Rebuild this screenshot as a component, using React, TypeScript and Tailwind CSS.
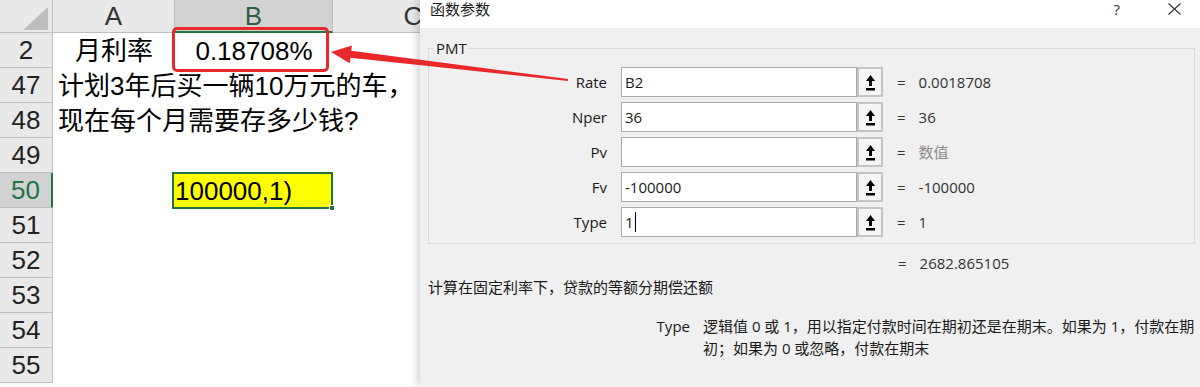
import React from 'react';

interface Param {
  label: string;
  value: string;
  result: string;
  muted?: boolean;
  caret?: boolean;
}

const params: Param[] = [
  { label: 'Rate', value: 'B2', result: '0.0018708' },
  { label: 'Nper', value: '36', result: '36' },
  { label: 'Pv', value: '', result: '数值', muted: true },
  { label: 'Fv', value: '-100000', result: '-100000' },
  { label: 'Type', value: '1', result: '1', caret: true },
];

const lowerRows = [49, 50, 51, 52, 53, 54, 55];

const RefIcon = () => (
  <svg width="11" height="17" viewBox="0 0 11 17">
    <polygon points="5.5,1 1,7 4,7 4,12 7,12 7,7 10,7" fill="#000" />
    <rect x="1" y="14" width="9" height="2.5" fill="#000" />
  </svg>
);

const RowHead: React.FC<{ n: number; active?: boolean }> = ({ n, active }) => (
  <div
    className={
      active
        ? 'flex w-[53px] shrink-0 items-center justify-center border-r-2 border-b border-r-[#217346] border-b-[#bfbfbf] bg-[#d2d2d2] text-[#217346]'
        : 'flex w-[53px] shrink-0 items-center justify-center border-r border-b border-[#bfbfbf] bg-[#e9e9e9] text-[#222]'
    }
  >
    {n}
  </div>
);

const Sheet = () => (
  <div className="w-[420px] shrink-0 overflow-hidden bg-white font-['Liberation_Sans','Noto_Sans_CJK_SC',sans-serif] text-[26px] leading-none text-black">
    <div className="flex h-[33px] w-[500px]">
      <div className="relative w-[53px] shrink-0 border-r border-b border-[#bfbfbf] bg-[#e9e9e9]">
        <svg className="absolute left-0 top-0" width="53" height="33">
          <polygon points="48,7 48,30 23,30" fill="#bdbdbd" />
        </svg>
      </div>
      <div className="flex w-[122px] shrink-0 items-center justify-center border-r border-b border-[#bfbfbf] bg-[#e9e9e9] text-[#333]">
        A
      </div>
      <div className="flex w-[158px] shrink-0 items-center justify-center border-r border-b-2 border-r-[#bfbfbf] border-b-[#217346] bg-[#d2d2d2] text-[#2f5d45]">
        B
      </div>
      <div className="flex w-[160px] shrink-0 items-center justify-center border-b border-[#bfbfbf] bg-[#e9e9e9] text-[#333]">
        C
      </div>
    </div>

    <div className="flex h-[35px]">
      <RowHead n={2} />
      <div className="flex w-[122px] shrink-0 items-center justify-center">月利率</div>
      <div className="flex w-[158px] shrink-0 items-center justify-center">0.18708%</div>
    </div>

    <div className="flex h-[35px]">
      <RowHead n={47} />
      <div className="flex items-center whitespace-nowrap pl-[5px]">计划3年后买一辆10万元的车，</div>
    </div>
    <div className="flex h-[35px]">
      <RowHead n={48} />
      <div className="flex items-center whitespace-nowrap pl-[5px]">现在每个月需要存多少钱?</div>
    </div>

    {lowerRows.map((n) => (
      <div key={n} className="flex h-[35px]">
        <RowHead n={n} active={n === 50} />
        {n === 50 && (
          <div className="relative -mt-px ml-[119px] flex h-[37px] w-[161px] shrink-0 items-center border-2 border-[#217346] bg-[#ffff00] pl-[1px] whitespace-nowrap">
            100000,1)
            <span className="absolute -right-[4px] -bottom-[4px] h-[6px] w-[6px] border border-white bg-[#217346]" />
          </div>
        )}
      </div>
    ))}
  </div>
);

const Dialog = () => (
  <div className="relative flex-1 bg-[#f0f0f0] font-['Open_Sans','Noto_Sans_CJK_SC',sans-serif] text-[15px] text-[#1a1a1a] shadow-[-3px_0_8px_rgba(0,0,0,0.18)]">
    <div className="flex h-[28px] bg-white">
      <div className="pl-[10px] leading-[18px]">函数参数</div>
      <div className="ml-auto pt-[1px] pr-[48px] text-[15px] leading-[16px] text-[#333]">?</div>
      <svg className="mr-[19px] mt-[3px]" width="13" height="12" viewBox="0 0 13 12">
        <path d="M0.5 0.5 L12.5 11.5 M12.5 0.5 L0.5 11.5" stroke="#333" strokeWidth="1.1" fill="none" />
      </svg>
    </div>

    <fieldset className="mt-[10px] mr-[5px] ml-[8px] border border-[#dcdcdc] pb-[6px]">
      <legend className="ml-[5px] px-[2px] leading-[20px]">PMT</legend>
      <div className="mt-[9px] flex flex-col gap-[5px]">
        {params.map((p) => (
          <div key={p.label} className="flex h-[30px] items-center">
            <div className="w-[178px] text-right">{p.label}</div>
            <div className="ml-[14px] flex h-full w-[236px] items-center border border-[#a9a9a9] bg-white pl-[3px]">
              {p.value}
              {p.caret && <span className="ml-px h-[20px] w-px bg-black" />}
            </div>
            <div className="flex h-full w-[26px] items-center justify-center border-2 border-[#c4c4c4] bg-[#f5f5f5]">
              <RefIcon />
            </div>
            <span className="ml-[14px] text-[#333]">=</span>
            <span className={p.muted ? 'ml-[13px] text-[#8a8a8a]' : 'ml-[13px] text-[#333]'}>{p.result}</span>
          </div>
        ))}
      </div>
    </fieldset>

    <div className="mt-[9px] flex h-[20px] items-center pl-[478px] text-[#333]">
      <span>=</span>
      <span className="ml-[13px]">2682.865105</span>
    </div>

    <div className="mt-[3px] pl-[8px] leading-[22px]">计算在固定利率下，贷款的等额分期偿还额</div>

    <div className="mt-[17px] flex leading-[22px]">
      <div className="w-[270px] text-right">Type</div>
      <div className="ml-[13px] whitespace-nowrap">
        <div>逻辑值 0 或 1，用以指定付款时间在期初还是在期末。如果为 1，付款在期</div>
        <div>初；如果为 0 或忽略，付款在期末</div>
      </div>
    </div>
  </div>
);

export default function App() {
  return (
    <div className="relative flex h-[387px] w-[1200px] overflow-hidden bg-white">
      <Sheet />
      <Dialog />

      {/* red annotation */}
      <div className="pointer-events-none absolute left-[172px] top-[27px] z-10 h-[45px] w-[157px] rounded-[5px] border-[3px] border-[#e9282c]" />
      <svg className="pointer-events-none absolute left-0 top-0 z-10" width="1200" height="387">
        <polygon
          points="331,52 351.9,45.4 351.3,50.8 568.1,79 567.9,81 350.5,57.8 349.8,63.3"
          fill="#e9282c"
        />
      </svg>
    </div>
  );
}
